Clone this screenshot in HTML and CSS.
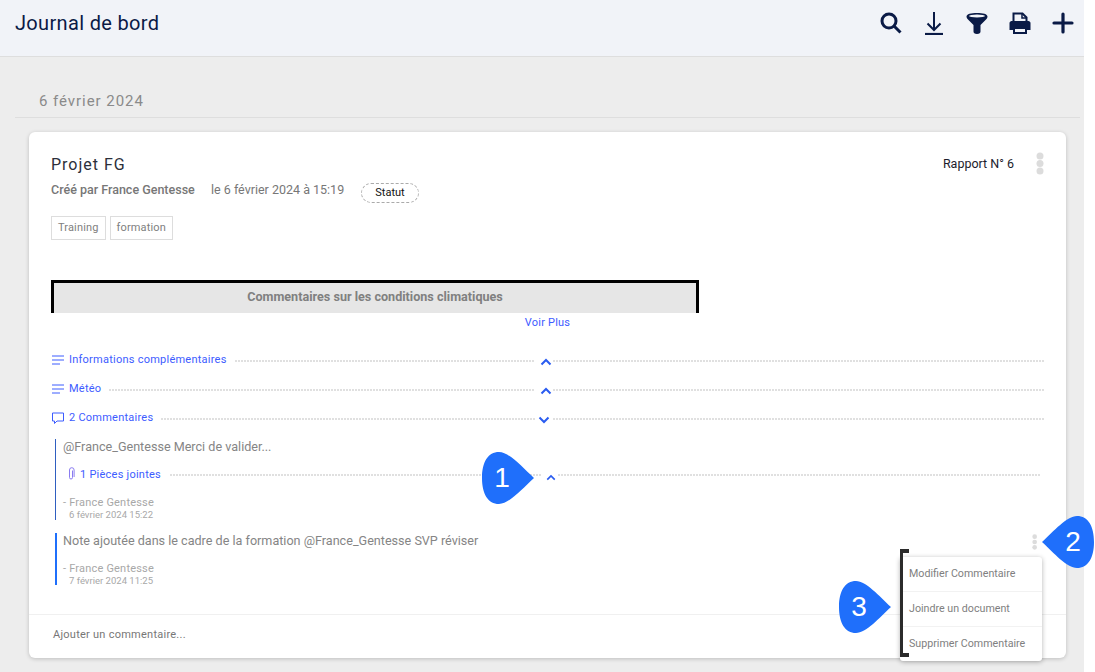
FILE: index.html
```html
<!DOCTYPE html>
<html lang="fr">
<head>
    <meta charset="UTF-8">
    <meta name="viewport" content="width=device-width, initial-scale=1.0">
    <title>Journal de bord</title>
    <link rel="stylesheet" href="styles.css">
</head>
<body>
    <div class="page">
        <header class="top-bar">
            <h1 class="top-title">Journal de bord</h1>
            <div class="top-icons">
                <svg class="top-icon" viewBox="0 0 24 24"><circle cx="10" cy="10" r="7" fill="none" stroke="#0a1a46" stroke-width="3"/><path d="M15 15l6.500 6.500" stroke="#0a1a46" stroke-width="3" fill="none"/></svg>
                <svg class="top-icon" viewBox="0 0 24 24"><path d="M12 1v18M5.500 12.500l6.500 6.500 6.500-6.500" stroke="#0a1a46" stroke-width="2" fill="none"/><path d="M3 23h18" stroke="#0a1a46" stroke-width="2.200"/></svg>
                <svg class="top-icon" viewBox="0 0 24 24"><path d="M1.500 5.500C1.500 3 6 2 12 2s10.500 1 10.500 3.500c0 1.500-1 2.500-2 3.500L15.500 14v6.500c0 1.500-1 2.500-3.500 2.500s-3.500-1-3.500-2.500V14L3.500 9c-1-1-2-2-2-3.500z" fill="#0a1a46"/><ellipse cx="12" cy="5" rx="8" ry="1.500" fill="#f1f3f8"/></svg>
                <svg class="top-icon" viewBox="0 0 24 24"><path d="M5.500 11V2.500h9l4 4V11" fill="none" stroke="#0a1a46" stroke-width="2"/><path d="M14 2.500v4.500h4.500" fill="none" stroke="#0a1a46" stroke-width="1.500"/><path d="M3.500 10h17c1 0 2 1 2 2v7h-4v-3h-13v3h-4v-7c0-1 1-2 2-2z" fill="#0a1a46"/><path d="M6 17h12v5H6z" fill="#f1f3f8" stroke="#0a1a46" stroke-width="2"/></svg>
                <svg class="top-icon" viewBox="0 0 24 24"><path d="M12 3v18M3 12h18" stroke="#0a1a46" stroke-width="3.200" stroke-linecap="round"/></svg>
            </div>
        </header>

        <main class="content">
            <h2 class="day-title">6 février 2024</h2>

            <section class="card">
                <div class="card-body">
                    <div class="card-head">
                        <div class="project-name">Projet FG</div>
                        <div class="report-no">Rapport N° 6</div>
                        <svg class="kebab" viewBox="0 0 8 24"><circle cx="4" cy="4" r="3.500"/><circle cx="4" cy="11.500" r="3.500"/><circle cx="4" cy="19" r="3.500"/></svg>
                    </div>
                    <div class="meta">
                        <strong class="meta-author">Créé par France Gentesse</strong>
                        <span class="meta-date">le 6 février 2024 à 15:19</span>
                        <span class="status">Statut</span>
                    </div>
                    <div class="tags">
                        <span class="tag">Training</span>
                        <span class="tag">formation</span>
                    </div>

                    <div class="weather-box">Commentaires sur les conditions climatiques</div>
                    <div class="see-more">Voir Plus</div>

                    <div class="fold-row">
                        <div class="fold-left">
                            <svg class="fold-icon" viewBox="0 0 14 12"><path d="M1 2h12M1 6h12M1 10h8"/></svg>
                            <span class="fold-label">Informations complémentaires</span>
                            <span class="dots"></span>
                        </div>
                        <svg class="chevron" viewBox="0 0 12 8"><path d="M1.500 6.500L6 2l4.500 4.500"/></svg>
                        <span class="dots"></span>
                    </div>
                    <div class="fold-row">
                        <div class="fold-left">
                            <svg class="fold-icon" viewBox="0 0 14 12"><path d="M1 2h12M1 6h12M1 10h8"/></svg>
                            <span class="fold-label">Météo</span>
                            <span class="dots"></span>
                        </div>
                        <svg class="chevron" viewBox="0 0 12 8"><path d="M1.500 6.500L6 2l4.500 4.500"/></svg>
                        <span class="dots"></span>
                    </div>
                    <div class="fold-row">
                        <div class="fold-left">
                            <svg class="fold-icon" viewBox="0 0 14 12"><path d="M1.500 1h11v8H6l-2.500 2.500V9h-2z"/></svg>
                            <span class="fold-label">2 Commentaires</span>
                            <span class="dots"></span>
                        </div>
                        <svg class="chevron chevron-down" viewBox="0 0 12 8"><path d="M1.500 1.500L6 6l4.500-4.500"/></svg>
                        <span class="dots"></span>
                    </div>

                    <div class="comment comment-first">
                        <p class="comment-text">@France_Gentesse Merci de valider...</p>
                        <div class="fold-row attach-row">
                            <div class="fold-left attach-left">
                                <svg class="clip-icon" viewBox="0 0 8 14"><path d="M5.500 3.500v7a1.500 1.500 0 0 1-3 0V3a2.300 2.300 0 0 1 4.600 0v7"/></svg>
                                <span class="fold-label">1 Pièces jointes</span>
                                <span class="dots"></span>
                            </div>
                            <svg class="chevron" viewBox="0 0 12 8"><path d="M1.500 6.500L6 2l4.500 4.500"/></svg>
                            <span class="dots"></span>
                        </div>
                        <div class="comment-author">- France Gentesse</div>
                        <div class="comment-date">6 février 2024 15:22</div>
                    </div>

                    <div class="comment comment-second">
                        <p class="comment-text">Note ajoutée dans le cadre de la formation @France_Gentesse SVP réviser</p>
                        <div class="comment-author">- France Gentesse</div>
                        <div class="comment-date">7 février 2024 11:25</div>
                        <svg class="kebab kebab-small" viewBox="0 0 8 24"><circle cx="4" cy="4" r="3.500"/><circle cx="4" cy="12" r="3.500"/><circle cx="4" cy="20" r="3.500"/></svg>
                    </div>
                </div>
                <div class="card-foot">Ajouter un commentaire...</div>
            </section>
        </main>

        <ul class="menu">
            <li class="menu-item">Modifier Commentaire</li>
            <li class="menu-item">Joindre un document</li>
            <li class="menu-item">Supprimer Commentaire</li>
        </ul>
        <div class="menu-bracket"></div>

        <div class="bubble bubble-1">
            <svg viewBox="0 0 52 52"><path d="M0 26C0 10 6 0 17 0c10 0 23 15 35 26C40 37 27 52 17 52 6 52 0 42 0 26z"/></svg>
            <span class="bubble-num">1</span>
        </div>
        <div class="bubble bubble-2">
            <svg viewBox="0 0 52 52"><path d="M52 26c0-16-6-26-17-26C25 0 12 15 0 26c12 11 25 26 35 26 11 0 17-10 17-26z"/></svg>
            <span class="bubble-num">2</span>
        </div>
        <div class="bubble bubble-3">
            <svg viewBox="0 0 52 52"><path d="M0 26C0 10 6 0 17 0c10 0 23 15 35 26C40 37 27 52 17 52 6 52 0 42 0 26z"/></svg>
            <span class="bubble-num">3</span>
        </div>
    </div>
</body>
</html>
```

FILE: styles.css
```css
* {
    box-sizing: border-box;
}
html, body {
    margin: 0;
    height: 100%;
    background-color: white;
    overflow: hidden;
}
body {
    font-family: Roboto, "Liberation Sans", sans-serif;
}
.page {
    position: relative;
    width: 1095px;
    height: 672px;
}
.top-bar {
    width: 1084px;
    height: 57px;
    background-color: #f1f3f8;
    border-bottom: 1px solid #dedede;
    display: flex;
    align-items: flex-start;
    justify-content: space-between;
    padding: 11px 9px 0 15px;
}
.top-title {
    margin: 0;
    font-size: 20px;
    line-height: 24px;
    font-weight: 400;
    letter-spacing: 0.33px;
    color: #0a1a46;
}
.top-icons {
    display: flex;
    gap: 19px;
}
.top-icon {
    width: 24px;
    height: 24px;
}
.content {
    width: 1084px;
    height: 615px;
    background-color: #ededed;
    padding: 35px 4px 0 15px;
}
.day-title {
    margin: 0;
    height: 26px;
    padding-left: 24px;
    border-bottom: 1px solid #dedede;
    font-size: 15px;
    line-height: 18px;
    font-weight: 400;
    letter-spacing: 0.95px;
    color: #8a8a8a;
}
.card {
    margin: 14px 14px 0 14px;
    height: 526px;
    background-color: white;
    border-radius: 6px;
    box-shadow: 0 1px 4px rgba(0, 0, 0, 0.2);
    display: flex;
    flex-direction: column;
}
.card-body {
    flex: 1;
    padding: 21px 22px 0 22px;
}
.card-head {
    display: flex;
    align-items: flex-start;
    height: 22px;
}
.project-name {
    flex: 1;
    font-size: 16px;
    line-height: 24px;
    letter-spacing: 1px;
    color: #2c2f3a;
}
.report-no {
    font-size: 12.500px;
    line-height: 22px;
    color: #1c1c2c;
    margin-right: 22px;
}
.kebab {
    width: 8px;
    height: 24px;
    fill: #dcdcdc;
    flex-shrink: 0;
}
.card-head .kebab {
    margin-top: -1px;
}
.meta {
    display: flex;
    align-items: flex-start;
    height: 20px;
    margin-top: 8px;
    font-size: 12.500px;
    line-height: 14px;
    color: #777;
}
.meta-author {
    font-weight: 500;
    width: 160px;
}
.meta-date {
    width: 150px;
}
.status {
    width: 58px;
    height: 20px;
    border: 1px dashed #aaa;
    border-radius: 10px;
    text-align: center;
    font-size: 11px;
    line-height: 17px;
    color: #111;
}
.tags {
    display: flex;
    gap: 4px;
    margin-top: 13px;
}
.tag {
    height: 24px;
    padding: 0 6px;
    border: 1px solid #ddd;
    font-size: 11px;
    line-height: 22px;
    letter-spacing: 0.15px;
    color: #808080;
}
.weather-box {
    width: 648px;
    height: 33px;
    margin-top: 40px;
    background-color: #e6e6e6;
    border: 3px solid black;
    border-bottom: none;
    text-align: center;
    font-size: 12.600px;
    font-weight: 700;
    line-height: 27px;
    color: #808080;
}
.see-more {
    text-align: center;
    font-size: 11px;
    line-height: 20px;
    letter-spacing: 0.2px;
    color: #3d5cff;
}
.fold-row {
    display: grid;
    grid-template-columns: 484px 18px 1fr;
    align-items: center;
    height: 29px;
}
.see-more + .fold-row {
    margin-top: 12px;
}
.fold-left {
    display: flex;
    align-items: center;
    gap: 4px;
}
.fold-icon {
    width: 14px;
    height: 12px;
    fill: none;
    stroke: #3d5cff;
    stroke-width: 1;
}
.fold-label {
    font-size: 11px;
    letter-spacing: 0.24px;
    color: #3d5cff;
    white-space: nowrap;
}
.dots {
    flex: 1;
    height: 2px;
    margin: 2px 0 0 4px;
    background-image: repeating-linear-gradient(to right, #e0e0e0 0, #e0e0e0 2px, transparent 2px, transparent 3px);
}
.chevron + .dots {
    margin-left: 0;
}
.chevron {
    width: 12px;
    height: 8px;
    margin: 4px 0 0 5px;
    fill: none;
    stroke: #2a5cf0;
    stroke-width: 2;
}
.chevron-down {
    margin-left: 3px;
}
.comment {
    position: relative;
    margin-left: 4px;
    padding-left: 7px;
    font-size: 12px;
}
.comment-first {
    height: 81px;
    margin-top: 7px;
    border-left: 1px solid #2f5fc0;
}
.comment-second {
    height: 52px;
    margin-top: 13px;
    border-left: 2px solid #1f6ffb;
    padding-left: 6px;
}
.comment-text {
    margin: 0;
    font-size: 12.600px;
    line-height: 16px;
    color: #858585;
}
.comment-author {
    font-size: 11px;
    line-height: 13px;
    letter-spacing: 0.2px;
    color: #a8a8a8;
}
.comment-date {
    padding-left: 6px;
    font-size: 9.500px;
    line-height: 12px;
    color: #a8a8a8;
}
.comment-first .comment-text {
    margin-bottom: 7px;
}
.comment-second .comment-text {
    margin-bottom: 13px;
}
.comment-second .comment-date {
    line-height: 11px;
}
.comment-first .comment-author {
    margin-top: 10px;
}
.attach-row {
    height: 24px;
    grid-template-columns: 478px 17px 1fr;
    margin-right: 3px;
}
.attach-left {
    padding-left: 4px;
    gap: 5px;
}
.attach-row .chevron {
    width: 10px;
    height: 7px;
    margin: 6px 0 0 5px;
}
.clip-icon {
    width: 8px;
    height: 14px;
    fill: none;
    stroke: #8a7cf0;
    stroke-width: 1;
}
.kebab-small {
    position: absolute;
    top: 1px;
    right: 7px;
    width: 5.330px;
    height: 16px;
}
.card-foot {
    height: 44px;
    border-top: 1px solid #f0f0f0;
    padding: 13px 0 0 24px;
    font-size: 11px;
    line-height: 14px;
    letter-spacing: 0.25px;
    color: #777;
}
.menu-bracket {
    position: absolute;
    left: 900px;
    top: 549px;
    width: 9px;
    height: 108px;
    border: 4px solid #2b2b2b;
    border-left-width: 3px;
    border-right: none;
}
.menu {
    position: absolute;
    left: 900px;
    top: 557px;
    width: 142px;
    margin: 0;
    padding: 0;
    list-style: none;
    background-color: white;
    border-radius: 3px;
    box-shadow: 0 1px 5px rgba(0, 0, 0, 0.3);
}
.menu-item {
    height: 35px;
    padding: 0 9px;
    border-bottom: 1px solid #f2f2f2;
    font-size: 10.700px;
    line-height: 33px;
    color: #808080;
    white-space: nowrap;
}
.menu-item:last-child {
    height: 34px;
    border-bottom: none;
}
.bubble {
    position: absolute;
    width: 52px;
    height: 52px;
}
.bubble svg {
    display: block;
    width: 52px;
    height: 52px;
    fill: #1f6ffb;
}
.bubble-num {
    position: absolute;
    top: 0;
    left: 0;
    width: 40px;
    text-align: center;
    font-family: "Liberation Sans", Arial, sans-serif;
    font-size: 28px;
    line-height: 52px;
    color: white;
}
.bubble-1 {
    left: 482px;
    top: 452px;
}
.bubble-2 {
    left: 1042px;
    top: 516px;
}
.bubble-2 .bubble-num {
    left: 11px;
}
.bubble-3 {
    left: 839px;
    top: 581px;
}
```
